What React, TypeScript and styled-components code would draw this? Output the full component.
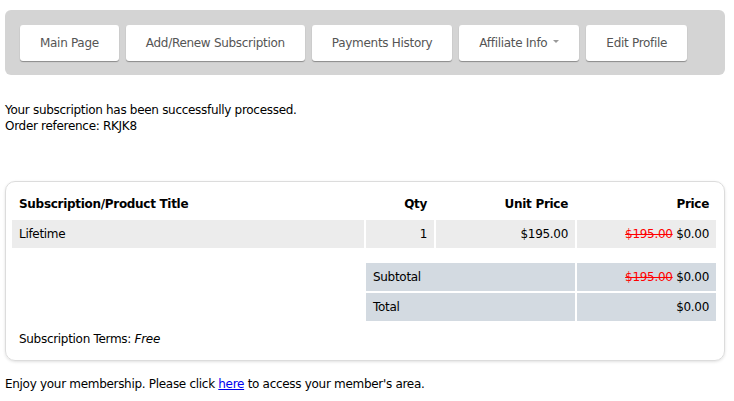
import React from 'react';
import styled, { createGlobalStyle } from 'styled-components';

const Global = createGlobalStyle`
  body {
    margin: 0;
    background: #fff;
    font-family: 'DejaVu Sans', Verdana, sans-serif;
    font-size: 12px;
    letter-spacing: -0.3px;
    color: #000;
  }
`;

export default function App() {
  return (
    <>
      <Global />
      <Page>
        <Nav>
          <NavButton>Main Page</NavButton>
          <NavButton>Add/Renew Subscription</NavButton>
          <NavButton>Payments History</NavButton>
          <NavButton>
            Affiliate Info <Caret />
          </NavButton>
          <NavButton>Edit Profile</NavButton>
        </Nav>

        <Message>
          Your subscription has been successfully processed.
          <br />
          Order reference: RKJK8
        </Message>

        <Card>
          <Table>
            <colgroup>
              <col style={{ width: 352 }} />
              <col style={{ width: 68 }} />
              <col style={{ width: 139 }} />
              <col />
            </colgroup>
            <thead>
              <tr>
                <Th>Subscription/Product Title</Th>
                <Th $right>Qty</Th>
                <Th $right>Unit Price</Th>
                <Th $right>Price</Th>
              </tr>
            </thead>
            <tbody>
              <tr>
                <Td>Lifetime</Td>
                <Td $right>1</Td>
                <Td $right>$195.00</Td>
                <Td $right>
                  <Old>$195.00</Old> $0.00
                </Td>
              </tr>
              <Spacer>
                <td colSpan={4} />
              </Spacer>
              <tr>
                <td />
                <Td $total colSpan={2}>Subtotal</Td>
                <Td $total $right>
                  <Old>$195.00</Old> $0.00
                </Td>
              </tr>
              <tr>
                <td />
                <Td $total colSpan={2}>Total</Td>
                <Td $total $right>$0.00</Td>
              </tr>
            </tbody>
          </Table>
          <Terms>
            Subscription Terms: <em>Free</em>
          </Terms>
        </Card>

        <Footer>
          Enjoy your membership. Please click <a href="#">here</a> to access your member's area.
        </Footer>
      </Page>
    </>
  );
}

const Page = styled.div`
  width: 720px;
  padding: 10px 0 0 5px;
`;

const Nav = styled.nav`
  display: flex;
  gap: 7px;
  height: 65px;
  box-sizing: border-box;
  padding: 15px 15px;
  background: #d4d4d4;
  border-radius: 6px;
`;

const NavButton = styled.div`
  display: flex;
  align-items: center;
  gap: 6px;
  height: 36px;
  padding: 0 20px;
  background: #fff;
  border-radius: 3px;
  box-shadow: 0 1px 1px rgba(0, 0, 0, 0.35);
  color: #555;
  white-space: nowrap;
`;

const Caret = styled.span`
  width: 0;
  height: 0;
  margin-top: -3px;
  border-left: 3px solid transparent;
  border-right: 3px solid transparent;
  border-top: 3px solid #999;
`;

const Message = styled.p`
  margin: 27px 0 0;
  line-height: 16px;
`;

const Card = styled.div`
  margin-top: 47px;
  padding: 7px 8px 13px 4px;
  border: 1px solid #dcdcdc;
  border-radius: 10px;
  box-shadow: 0 1px 3px rgba(0, 0, 0, 0.12);
`;

const Table = styled.table`
  width: 708px;
  border-collapse: separate;
  border-spacing: 2px;
  margin: -2px 0;
  font-size: 12px;
`;

const Th = styled.th<{ $right?: boolean }>`
  height: 28px;
  padding: 1px 7px 0;
  font-weight: bold;
  text-align: ${(p) => (p.$right ? 'right' : 'left')};
`;

const Td = styled.td<{ $right?: boolean; $total?: boolean }>`
  height: 28px;
  padding: 0 7px;
  background: ${(p) => (p.$total ? '#d3dae1' : '#ececec')};
  text-align: ${(p) => (p.$right ? 'right' : 'left')};
`;

const Spacer = styled.tr`
  td {
    height: 11px;
    padding: 0;
  }
`;

const Old = styled.span`
  color: #ff0000;
  text-decoration: line-through;
`;

const Terms = styled.div`
  margin-top: 10px;
  padding-left: 9px;
  line-height: 16px;
`;

const Footer = styled.p`
  margin: 15px 0 0;
  line-height: 16px;

  a {
    color: #0000ee;
  }
`;
